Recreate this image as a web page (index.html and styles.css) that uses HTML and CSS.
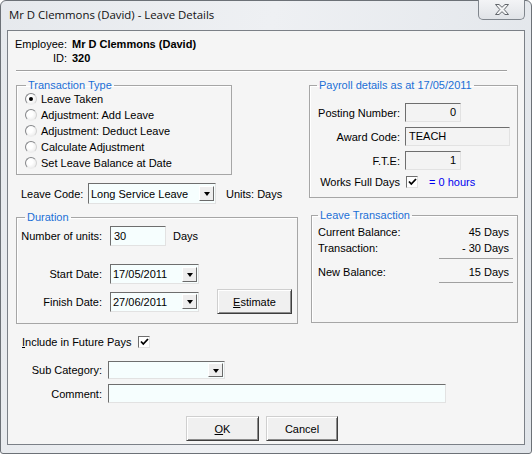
FILE: index.html
```html
<!DOCTYPE html>
<html lang="en">
<head>
  <meta charset="UTF-8">
  <title>Leave Details</title>
  <link rel="stylesheet" href="styles.css">
</head>
<body>
<div class="window">
  <!--title bar-->
  <div class="titlebar">
    <span class="title">Mr D Clemmons (David) - Leave Details</span>
    <span class="close">
      <svg width="14" height="11" viewBox="0 0 14 11"><polygon points="0.5,0.5 4,0.5 7,3.3 10,0.5 13.5,0.5 9.2,5.5 13.5,10.5 10,10.5 7,7.7 4,10.5 0.5,10.5 4.8,5.5" fill="#f4f5f6" stroke="#62666b" stroke-width="1"/></svg>
    </span>
  </div>

  <div class="client">
    <div class="employee">
      <span class="lbl">Employee:</span><b>Mr D Clemmons (David)</b>
      <span class="lbl">ID:</span><b>320</b>
    </div>
    <hr class="sep">

    <div class="middle">
      <div class="leftcol">
        <fieldset class="group trans">
          <legend>Transaction Type</legend>
          <div class="radio-row"><span class="radio on"></span>Leave Taken</div>
          <div class="radio-row"><span class="radio"></span>Adjustment: Add Leave</div>
          <div class="radio-row"><span class="radio"></span>Adjustment: Deduct Leave</div>
          <div class="radio-row"><span class="radio"></span>Calculate Adjustment</div>
          <div class="radio-row"><span class="radio"></span>Set Leave Balance at Date</div>
        </fieldset>

        <div class="leave-code">
          <span class="code-lbl">Leave Code:</span>
          <div class="combo code"><span>Long Service Leave</span><span class="drop"></span></div>
          <span class="units">Units: Days</span>
        </div>

        <fieldset class="group duration">
          <legend>Duration</legend>
          <div class="field-row">
            <span class="lbl">Number of units:</span>
            <div class="textbox num">30</div>
            <span class="days">Days</span>
          </div>
          <div class="field-row start">
            <span class="lbl">Start Date:</span>
            <div class="combo date"><span>17/05/2011</span><span class="drop"></span></div>
          </div>
          <div class="field-row finish">
            <span class="lbl">Finish Date:</span>
            <div class="combo date"><span>27/06/2011</span><span class="drop"></span></div>
            <button class="btn estimate"><u>E</u>stimate</button>
          </div>
        </fieldset>
      </div>

      <div class="rightcol">
        <fieldset class="group payroll">
          <legend>Payroll details as at 17/05/2011</legend>
          <div class="pay-grid">
            <span class="lbl">Posting Number:</span><div class="textbox ro small">0</div>
            <span class="lbl">Award Code:</span><div class="textbox ro award">TEACH</div>
            <span class="lbl">F.T.E:</span><div class="textbox ro small">1</div>
            <span class="lbl">Works Full Days</span>
            <div class="full-days"><span class="check"><svg width="9" height="8" viewBox="0 0 9 8"><polyline points="1,3.5 3.3,6 8,1" fill="none" stroke="#000" stroke-width="1.8"/></svg></span><span class="hours">= 0 hours</span></div>
          </div>
        </fieldset>

        <fieldset class="group ltrans">
          <legend>Leave Transaction</legend>
          <div class="bal-row"><span>Current Balance:</span><span class="val">45 Days</span></div>
          <div class="bal-row"><span>Transaction:</span><span class="val">- 30 Days</span></div>
          <div class="rule"></div>
          <div class="bal-row new"><span>New Balance:</span><span class="val">15 Days</span></div>
          <div class="rule"></div>
        </fieldset>
      </div>
    </div>

    <div class="include">
      <span><u>I</u>nclude in Future Pays</span>
      <span class="check"><svg width="9" height="8" viewBox="0 0 9 8"><polyline points="1,3.5 3.3,6 8,1" fill="none" stroke="#000" stroke-width="1.8"/></svg></span>
    </div>

    <div class="extra">
      <span class="lbl">Sub Category:</span>
      <div class="combo sub"><span></span><span class="drop"></span></div>
      <span class="lbl">Comment:</span>
      <div class="textbox comment"></div>
    </div>

    <div class="buttons">
      <button class="btn ok"><u>O</u>K</button>
      <button class="btn cancel">Cancel</button>
    </div>
  </div>
</div>
</body>
</html>
```

FILE: styles.css
```css
*{box-sizing:border-box;}
body{
  margin:0;
  font-family:"Liberation Sans", Arial, sans-serif;
  font-size:11px;
  color:#000;
  background:#fff;
}

/*window frame*/
.window{
  width:532px; height:454px;
  border:1px solid #6c7177;
  border-radius:6px 6px 3px 3px;
  background:linear-gradient(100deg, #e6e9ed 0%, #eef0f3 45%, #e1e5ea 100%);
  padding:0 6px 8px;
  display:flex;
  flex-direction:column;
}
.titlebar{
  height:29px;
  display:flex;
  justify-content:space-between;
  align-items:flex-start;
}
.title{
  font-family:"Open Sans", "Noto Sans", sans-serif;
  font-size:11.4px;
  line-height:16px;
  margin:6px 0 0 2px;
  color:#111;
}
.close{
  width:47px; height:20px;
  margin-top:-1px;
  border:1px solid #80868d;
  border-top:none;
  border-radius:0 0 5px 5px;
  background:linear-gradient(#f3f4f6, #e0e3e7);
  display:flex;
  align-items:center;
  justify-content:center;
}
.client{
  flex:1;
  border:1px solid #7b8087;
  background:#f5f5f5;
}

/*employee header*/
.employee{
  display:grid;
  grid-template-columns:auto 1fr;
  column-gap:5px;
  line-height:14px;
  padding:6px 0 0 7px;
}
.employee .lbl{text-align:right;}
.sep{
  margin:5px 17px 0 8px;
  height:0;
  border:0;
  border-top:1px solid #a0a0a0;
  border-bottom:1px solid #fff;
}

/*group boxes*/
.middle{
  display:flex;
  gap:11px;
  margin:7px 0 0 8px;
}
.leftcol{width:282px;}
.rightcol{width:209px;}
.group{
  margin:0;
  min-width:0;
  border:1px solid #a6a6a6;
  box-shadow:inset 1px 1px #fff;
}
.group legend{
  padding:0 2px;
  line-height:12px;
  color:#1b6fd6;
}

.trans{width:216px; padding:0 0 3px 8px;}
.trans legend{margin-left:1px;}
.radio-row{
  display:flex;
  align-items:center;
  gap:4px;
  height:16px;
}
.radio{
  width:12px; height:12px;
  border-radius:50%;
  border:1px solid;
  border-color:#85878a #d3d3d3 #eeeeee #85878a;
  background:radial-gradient(circle at 40% 40%, #ffffff 30%, #e4e4e4 100%);
  display:flex;
  align-items:center;
  justify-content:center;
}
.radio.on::after{
  content:"";
  width:4px; height:4px;
  border-radius:50%;
  background:#000;
}

/*inputs*/
.textbox, .combo{
  border:1px solid;
  border-color:#6e6e6e #e2e2e2 #e2e2e2 #6e6e6e;
  background:#f6fefe;
}
.textbox{
  height:20px;
  line-height:18px;
  padding:0 3px;
}
.textbox.ro{
  height:19px;
  line-height:17px;
  background:#f3f3f3;
}
.textbox.small{width:56px; text-align:right; padding-right:4px;}
.textbox.award{width:105px;}
.combo{
  display:flex;
  align-items:center;
  justify-content:space-between;
  padding:0 1px 0 2px;
}
.drop{
  width:15px; height:15px;
  border:1px solid;
  border-color:#fff #6a6a6a #6a6a6a #fff;
  background:#eeeeee;
  display:flex;
  align-items:center;
  justify-content:center;
}
.drop::after{
  content:"";
  border-left:3.5px solid transparent;
  border-right:3.5px solid transparent;
  border-top:4px solid #000;
  margin-top:1px;
}

.leave-code{
  display:flex;
  align-items:center;
  margin-top:8px;
  padding-left:5px;
}
.code-lbl{width:67px;}
.combo.code{width:128px; height:21px;}
.units{margin-left:10px;}

.duration{
  margin-top:7px;
  padding:3px 0 9px 6px;
}
.duration legend{margin-left:2px;}
.field-row{
  display:flex;
  align-items:center;
}
.field-row .lbl{
  width:79px;
  flex-shrink:0;
  display:flex;
  justify-content:flex-end;
  white-space:nowrap;
  margin-right:8px;
}
.textbox.num{width:56px;}
.days{margin-left:7px;}
.field-row.start{margin-top:18px;}
.field-row.finish{margin-top:5px;}
.combo.date{width:89px; height:20px;}

/*buttons*/
.btn{
  font:inherit;
  color:#000;
  height:25px;
  padding:0;
  border:1px solid;
  border-color:#cfcfcf #3e3e3e #3e3e3e #cfcfcf;
  box-shadow:inset 1px 1px #fff, inset -1px -1px #8c8c8c;
  background:#f0f0f0;
}
.estimate{width:75px; margin-left:18px;}

/*payroll details*/
.payroll{padding:12px 0 8px 7px;}
.pay-grid{
  display:grid;
  grid-template-columns:83px auto;
  column-gap:5px;
  row-gap:5px;
  align-items:center;
}
.pay-grid .lbl{text-align:right; line-height:14px; white-space:nowrap;}
.check{
  width:12px; height:12px;
  border:1px solid;
  border-color:#6e6e6e #e2e2e2 #e2e2e2 #6e6e6e;
  background:#fff;
  display:flex;
  align-items:center;
  justify-content:center;
}
.full-days{
  display:flex;
  align-items:center;
  gap:11px;
  margin-left:1px;
}
.hours{color:#0000f0;}

/*leave transaction*/
.ltrans{
  margin:11px 0 0 2px;
  padding:3px 4px 39px 6px;
}
.bal-row{
  display:flex;
  justify-content:space-between;
  align-items:center;
  height:16px;
}
.bal-row .val{
  width:74px;
  text-align:right;
  padding-right:4px;
}
.bal-row.new{margin-top:5px;}
.rule{
  width:74px;
  margin:2px 0 0 auto;
  border-top:1px solid #a0a0a0;
}

/*bottom area*/
.include{
  display:flex;
  align-items:center;
  gap:7px;
  height:14px;
  margin:11px 0 0 14px;
}
.extra{
  display:grid;
  grid-template-columns:86px auto;
  column-gap:6px;
  row-gap:5px;
  align-items:center;
  margin:12px 0 0 8px;
}
.extra .lbl{text-align:right;}
.combo.sub{width:117px; height:18px;}
.combo.sub .drop{height:14px;}
.textbox.comment{width:338px; height:19px;}

.buttons{
  display:flex;
  gap:7px;
  margin:13px 0 0 178px;
}
.ok{width:73px;}
.cancel{width:72px;}
```
